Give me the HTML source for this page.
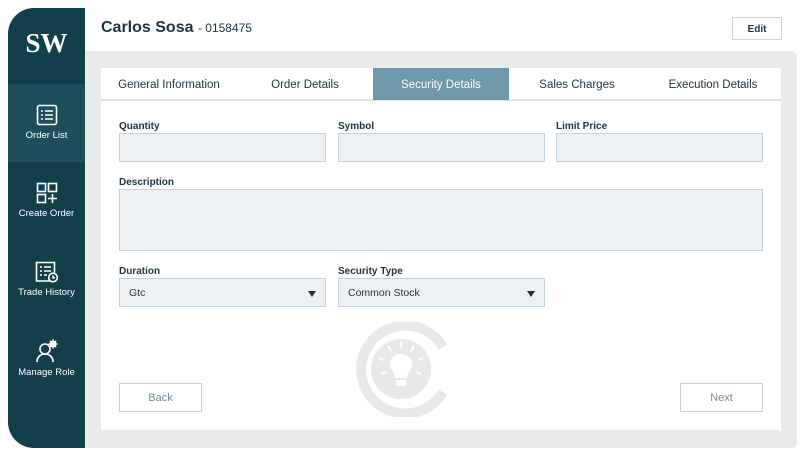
<!DOCTYPE html>
<html><head><meta charset="utf-8"><style>
*{box-sizing:border-box;margin:0;padding:0}
body{width:805px;height:456px;background:#fff;font-family:"Liberation Sans",sans-serif;position:relative;overflow:hidden;color:#1c3c48}
.sb{position:absolute;left:8px;top:8px;width:77px;height:440px;background:#133f4b;border-radius:26px 0 0 26px;overflow:hidden}
.logo{position:absolute;top:20px;width:100%;text-align:center;font-family:"Liberation Serif",serif;font-weight:bold;font-size:27px;color:#fff}
.item{position:absolute;left:0;width:100%;text-align:center;color:#fff;font-size:9.5px}
.item svg{display:block;margin:0 auto 4px}
.sel{background:#1d4e59}
.hdr{position:absolute;left:101px;top:19px;font-size:16px;font-weight:bold;color:#1c3440}
.hdr span{font-size:12px;font-weight:normal}
.edit{position:absolute;left:732px;top:17px;width:50px;height:23px;border:1px solid #c9d6dc;font-size:10px;text-align:center;line-height:23px;color:#1c3440;font-weight:bold}
.gray{position:absolute;left:85px;top:51px;width:712px;height:397px;background:#ebebeb;border-radius:0 6px 6px 0}
.card{position:absolute;left:101px;top:68px;width:680px;height:362px;background:#fff}
.tabs{position:absolute;left:0;top:0;width:680px;height:33px;border-bottom:2px solid #dbe5ea}
.tab{position:absolute;top:0;height:32px;line-height:34px;font-size:11.5px;text-align:center;color:#1c3440}
.act{background:#6f98a8;color:#fff}
.lbl{position:absolute;font-size:10px;font-weight:bold;color:#1c3440}
.inp{position:absolute;background:#edf1f4;border:1px solid #c5d4dc;font-size:10.5px;padding-left:9px;line-height:29px;color:#1c3440}
.arr{position:absolute;right:9px;top:12px;width:0;height:0;border-left:4px solid transparent;border-right:4px solid transparent;border-top:6px solid #1c3440}
.btn{position:absolute;border:1px solid #c5d4dc;font-size:11px;color:#6f8fa0;text-align:center;line-height:29px;background:#fff}
</style></head><body>
<div class="sb">
 <div class="logo">SW</div>
 <div class="item sel" style="top:76px;height:78px;padding-top:20px">
  <svg width="22" height="22" viewBox="0 0 22 22" fill="none" stroke="#fff" stroke-width="1.6"><rect x="1.5" y="1.5" width="19" height="19" rx="2"/><path d="M5 7h2M9 7h8M5 11h2M9 11h8M5 15h2M9 15h8"/></svg>Order List</div>
 <div class="item" style="top:174px">
  <svg width="22" height="22" viewBox="0 0 22 22" fill="none" stroke="#fff" stroke-width="1.6"><rect x="1.5" y="1.5" width="8" height="8"/><rect x="12.5" y="1.5" width="8" height="8"/><rect x="1.5" y="12.5" width="8" height="8"/><path d="M16.5 12v9M12 16.5h9"/></svg>Create Order</div>
 <div class="item" style="top:253px">
  <svg width="24" height="22" viewBox="0 0 24 22" fill="none" stroke="#fff" stroke-width="1.6"><path d="M15 20H1.5V1.5h18v10"/><path d="M5 6h2M9 6h7M5 10h2M9 10h7M5 14h2M9 14h3"/><circle cx="18" cy="16.5" r="4.3"/><path d="M18 14.5v2.3h1.8"/></svg>Trade History</div>
 <div class="item" style="top:331px">
  <svg width="24" height="24" viewBox="0 0 24 24" fill="none" stroke="#fff" stroke-width="1.6"><circle cx="10" cy="10" r="5" /><path d="M2 23c0-5 3.5-8 8-8s8 3 8 8"/><circle cx="18" cy="5" r="2.5" fill="#fff"/><path d="M18 0.5v9M13.5 5h9M15 2l6 6M21 2l-6 6"/></svg>Manage Role</div>
</div>
<div class="hdr">Carlos Sosa <span>- 0158475</span></div>
<div class="edit">Edit</div>
<div class="gray"></div>
<div class="card">
 <div class="tabs">
  <div class="tab" style="left:0;width:136px">General Information</div>
  <div class="tab" style="left:136px;width:136px">Order Details</div>
  <div class="tab act" style="left:272px;width:136px">Security Details</div>
  <div class="tab" style="left:408px;width:136px">Sales Charges</div>
  <div class="tab" style="left:544px;width:136px">Execution Details</div>
 </div>
</div>
<div class="lbl" style="left:119px;top:121px">Quantity</div>
<div class="inp" style="left:119px;top:133px;width:207px;height:29px"></div>
<div class="lbl" style="left:338px;top:121px">Symbol</div>
<div class="inp" style="left:338px;top:133px;width:207px;height:29px"></div>
<div class="lbl" style="left:556px;top:121px">Limit Price</div>
<div class="inp" style="left:556px;top:133px;width:207px;height:29px"></div>
<div class="lbl" style="left:119px;top:177px">Description</div>
<div class="inp" style="left:119px;top:189px;width:644px;height:62px"></div>
<div class="lbl" style="left:119px;top:266px">Duration</div>
<div class="inp" style="left:119px;top:278px;width:207px;height:29px">Gtc<div class="arr"></div></div>
<div class="lbl" style="left:338px;top:266px">Security Type</div>
<div class="inp" style="left:338px;top:278px;width:207px;height:29px">Common Stock<div class="arr"></div></div>
<svg style="position:absolute;left:355px;top:322px" width="95" height="95" viewBox="0 0 95 95">
 <path d="M88 25A44 44 0 1 0 88 70" fill="none" stroke="#e9e9e9" stroke-width="10"/>
 <circle cx="46" cy="47" r="30" fill="#e9e9e9"/>
 <path d="M46 32c-8 0-12 6-11 12 1 5 5 7 5 12h12c0-5 4-7 5-12 1-6-3-12-11-12z" fill="#fff"/>
 <rect x="41" y="58" width="10" height="6" fill="#fff"/>
 <path d="M46 20v6M33 24l3 5M59 24l-3 5M24 36l5 2M68 36l-5 2M26 52l5-2M66 52l-5-2" stroke="#fff" stroke-width="2.2"/>
</svg>
<div class="btn" style="left:119px;top:383px;width:83px;height:29px">Back</div>
<div class="btn" style="left:680px;top:383px;width:83px;height:29px">Next</div>
</body></html>
